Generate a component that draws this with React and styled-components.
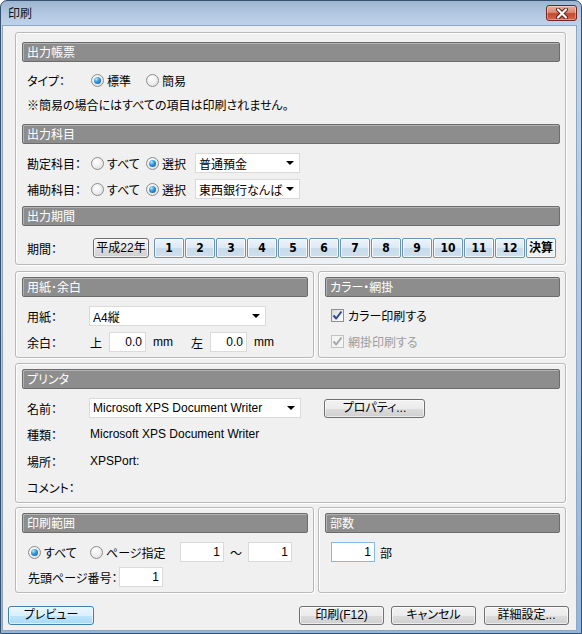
import React from 'react';
import styled, { createGlobalStyle, css } from 'styled-components';

const GlobalStyle = createGlobalStyle`
  html, body { margin: 0; padding: 0; background: #ffffff; }
  body {
    font-family: "Liberation Sans", "Noto Sans CJK JP", sans-serif;
    font-size: 12px;
    color: #000;
    font-feature-settings: "palt";
  }
  * { box-sizing: border-box; }
`;

const Window = styled.div`
  width: 582px;
  height: 634px;
  display: flex;
  flex-direction: column;
  border: 1px solid #34516f;
  border-radius: 7px 7px 0 0;
  background: linear-gradient(180deg, #9db5d1 0px, #b2c8e1 12px, #bed3ea 24px, #a9c6e6 60%, #8fb6df 100%);
  padding: 0 4px 2px 1px;
  overflow: hidden;
`;

const TitleBar = styled.div`
  height: 24px;
  display: flex;
  align-items: flex-start;
  flex-shrink: 0;
`;

const TitleText = styled.span`
  margin: 4px 0 0 6px;
  font-family: "Noto Sans CJK JP", sans-serif;
  font-size: 12px;
  line-height: 16px;
  color: #111;
`;

const CloseButton = styled.div`
  margin: 4px 0 0 auto;
  width: 31px;
  height: 16px;
  border: 1px solid #6a2a22;
  border-radius: 3px;
  background: linear-gradient(180deg, #e9ad9c 0%, #dc8b75 45%, #c4492f 55%, #d2684b 100%);
  box-shadow: inset 0 0 0 1px rgba(255, 255, 255, 0.35);
  display: flex;
  align-items: center;
  justify-content: center;
`;

const Client = styled.div`
  flex: 1;
  min-height: 0;
  background: #f0f0f0;
  border: 1px solid #8ea6c1;
  padding: 6px 7px 0 5px;
  display: flex;
  flex-direction: column;
`;

const Groups = styled.div`
  display: flex;
  flex-direction: column;
  flex-shrink: 0;
  padding: 0 3px 0 7px;
`;

const GroupRow = styled.div`
  display: flex;
  flex-shrink: 0;
  gap: 4px;
  margin-top: ${(p) => p.$mt}px;
`;

const GroupBox = styled.div`
  height: ${(p) => p.$h}px;
  flex-shrink: 0;
  ${(p) =>
    p.$w
      ? css`
          width: ${p.$w}px;
        `
      : ''}
  ${(p) =>
    p.$grow
      ? css`
          flex-grow: 1;
          flex-basis: 0;
        `
      : ''}
  margin-top: ${(p) => p.$mt || 0}px;
  border: 1px solid #b9b9b9;
  border-radius: 3px;
  box-shadow: inset 1px 1px 0 #ffffff, 1px 1px 0 #ffffff;
  padding: 0 5px 0 6px;
  display: flex;
  flex-direction: column;
`;

const SectionHeader = styled.div`
  height: 20px;
  flex-shrink: 0;
  margin-top: ${(p) => p.$mt}px;
  background: #8d8d8d;
  border: 1px solid #6c6c6c;
  border-radius: 2px;
  box-shadow: inset 1px 1px 0 #b3b3b3;
  color: #ffffff;
  padding-left: 4px;
  line-height: 18px;
  font-family: "Noto Sans CJK JP", sans-serif;
`;

const Row = styled.div`
  display: flex;
  align-items: center;
  height: 20px;
  flex-shrink: 0;
  margin-top: ${(p) => p.$mt}px;
  padding-left: ${(p) => (p.$pl === undefined ? 5 : p.$pl)}px;
  white-space: nowrap;
`;

const Label = styled.span`
  width: ${(p) => p.$w}px;
  flex-shrink: 0;
  font-family: "Noto Sans CJK JP", sans-serif;
`;

const Text = styled.span`
  margin-left: ${(p) => p.$ml || 0}px;
  margin-right: ${(p) => p.$mr || 0}px;
  color: ${(p) => (p.$disabled ? '#9d9d9d' : '#000')};
`;

const RadioOption = styled.span`
  display: inline-flex;
  align-items: center;
  width: ${(p) => (p.$w ? `${p.$w}px` : 'auto')};
  flex-shrink: 0;
`;

const RadioCircle = styled.span`
  width: 13px;
  height: 13px;
  border-radius: 50%;
  border: 1px solid #8a8c8e;
  background: radial-gradient(circle at 40% 35%, #ffffff 0%, #ececec 55%, #d4d4d4 100%);
  margin-right: 3px;
  flex-shrink: 0;
  display: flex;
  align-items: center;
  justify-content: center;
`;

const RadioDot = styled.span`
  width: 7px;
  height: 7px;
  border-radius: 50%;
  background: radial-gradient(circle at 35% 30%, #b6ecff 0%, #3a9be0 40%, #0a4c8e 100%);
`;

const Select = styled.div`
  width: ${(p) => p.$w}px;
  height: 20px;
  flex-shrink: 0;
  background: #ffffff;
  border: 1px solid #dadada;
  display: flex;
  align-items: center;
  padding: 0 5px 0 3px;
`;

const SelectText = styled.span`
  flex: 1;
  min-width: 0;
  overflow: hidden;
  white-space: nowrap;
  text-overflow: clip;
`;

const Caret = styled.span`
  width: 0;
  height: 0;
  margin-left: 3px;
  flex-shrink: 0;
  border-left: 4px solid transparent;
  border-right: 4px solid transparent;
  border-top: 4px solid #000;
`;

const Field = styled.div`
  width: ${(p) => p.$w}px;
  height: 20px;
  flex-shrink: 0;
  background: #ffffff;
  border: 1px solid ${(p) => (p.$focus ? '#86b9e8' : '#dadada')};
  text-align: right;
  padding-right: 3px;
  line-height: 18px;
`;

const Tilde = styled.span`
  width: 24px;
  text-align: center;
  flex-shrink: 0;
`;

const YearButton = styled.div`
  width: 56px;
  height: 20px;
  margin-right: 5px;
  flex-shrink: 0;
  border: 1px solid #707070;
  border-radius: 3px;
  background: linear-gradient(180deg, #f4f4f4 0%, #ebebeb 50%, #dddddd 51%, #d0d0d0 100%);
  box-shadow: inset 0 0 0 1px rgba(255, 255, 255, 0.7);
  text-align: center;
  line-height: 18px;
`;

const PeriodButton = styled.div`
  width: 30px;
  height: 20px;
  margin-right: 1px;
  flex-shrink: 0;
  border: 1px solid #6a93b6;
  border-radius: 2px;
  background: ${(p) =>
    p.$plain
      ? 'linear-gradient(180deg, #f6f9fc 0%, #eaf0f6 100%)'
      : 'linear-gradient(180deg, #edf4fa 0%, #dde9f3 48%, #c8dbea 52%, #cfdfed 100%)'};
  box-shadow: inset 0 0 0 1px rgba(255, 255, 255, 0.75);
  text-align: center;
  line-height: 18px;
  font-weight: bold;
  font-family: "DejaVu Sans Condensed", "Noto Sans CJK JP", sans-serif;
  font-size: 12px;
`;

const CheckBox = styled.span`
  width: 13px;
  height: 13px;
  flex-shrink: 0;
  margin-right: 4px;
  border: 1px solid ${(p) => (p.$disabled ? '#c2c2c2' : '#8e8f8f')};
  background: ${(p) =>
    p.$disabled ? '#f4f4f4' : 'linear-gradient(135deg, #d8d8d8 0%, #f6f6f6 70%, #ffffff 100%)'};
  display: flex;
  align-items: center;
  justify-content: center;
`;

const WinButton = styled.div`
  width: ${(p) => p.$w}px;
  height: 19px;
  flex-shrink: 0;
  margin-left: ${(p) => p.$ml || 0}px;
  border: 1px solid ${(p) => (p.$primary ? '#3c7fb1' : '#707070')};
  border-radius: 3px;
  background: ${(p) =>
    p.$primary
      ? 'linear-gradient(180deg, #eaf6fd 0%, #d9f0fc 50%, #bee6fd 51%, #a7d9f5 100%)'
      : 'linear-gradient(180deg, #f2f2f2 0%, #ebebeb 50%, #dddddd 51%, #cfcfcf 100%)'};
  box-shadow: inset 0 0 0 1px rgba(255, 255, 255, 0.6);
  text-align: center;
  line-height: 17px;
  white-space: nowrap;
`;

const ButtonBar = styled.div`
  display: flex;
  align-items: center;
  flex-shrink: 0;
  margin-top: 13px;
`;

const Spacer = styled.div`
  flex: 1;
`;

const Radio = ({ checked, children, w }) => (
  <RadioOption $w={w}>
    <RadioCircle>{checked && <RadioDot />}</RadioCircle>
    <Text>{children}</Text>
  </RadioOption>
);

const Check = ({ disabled, children }) => (
  <>
    <CheckBox $disabled={disabled}>
      <svg width="11" height="11" viewBox="0 0 11 11">
        <path
          d="M1.5 5.5 L4.2 8.5 L9.5 1.5"
          fill="none"
          stroke={disabled ? '#a8a8a8' : '#2d4a93'}
          strokeWidth="2"
          strokeLinejoin="round"
        />
      </svg>
    </CheckBox>
    <Text $disabled={disabled}>{children}</Text>
  </>
);

const Dropdown = ({ w, children }) => (
  <Select $w={w}>
    <SelectText>{children}</SelectText>
    <Caret />
  </Select>
);

const months = ['1', '2', '3', '4', '5', '6', '7', '8', '9', '10', '11', '12'];

export default function App() {
  return (
    <>
      <GlobalStyle />
      <Window>
        <TitleBar>
          <TitleText>印刷</TitleText>
          <CloseButton>
            <svg width="14" height="11" viewBox="0 0 14 11">
              <path d="M3 1.5 L11 9.5 M11 1.5 L3 9.5" stroke="#5a1e16" strokeWidth="4" strokeLinecap="round" />
              <path d="M3 1.5 L11 9.5 M11 1.5 L3 9.5" stroke="#ffffff" strokeWidth="2.2" strokeLinecap="round" />
            </svg>
          </CloseButton>
        </TitleBar>
        <Client>
          <Groups>
            <GroupBox $h={233}>
              <SectionHeader $mt={9}>出力帳票</SectionHeader>
              <Row $mt={8}>
                <Label $w={64}>タイプ：</Label>
                <Radio checked w={55}>標準</Radio>
                <Radio>簡易</Radio>
              </Row>
              <Row $mt={4}>
                <Text>※簡易の場合にはすべての項目は印刷されません。</Text>
              </Row>
              <SectionHeader $mt={10}>出力科目</SectionHeader>
              <Row $mt={9}>
                <Label $w={64}>勘定科目：</Label>
                <Radio w={55}>すべて</Radio>
                <Radio checked w={49}>選択</Radio>
                <Dropdown w={105}>普通預金</Dropdown>
              </Row>
              <Row $mt={6}>
                <Label $w={64}>補助科目：</Label>
                <Radio w={55}>すべて</Radio>
                <Radio checked w={49}>選択</Radio>
                <Dropdown w={105}>東西銀行なんば支店</Dropdown>
              </Row>
              <SectionHeader $mt={7}>出力期間</SectionHeader>
              <Row $mt={12}>
                <Label $w={66}>期間：</Label>
                <YearButton>平成22年</YearButton>
                {months.map((m) => (
                  <PeriodButton key={m}>{m}</PeriodButton>
                ))}
                <PeriodButton $plain>決算</PeriodButton>
              </Row>
            </GroupBox>

            <GroupRow $mt={6}>
              <GroupBox $h={87} $w={299}>
                <SectionHeader $mt={5}>用紙･余白</SectionHeader>
                <Row $mt={9}>
                  <Label $w={62}>用紙：</Label>
                  <Dropdown w={177}>A4縦</Dropdown>
                </Row>
                <Row $mt={6}>
                  <Label $w={63}>余白：</Label>
                  <Text $mr={7}>上</Text>
                  <Field $w={37}>0.0</Field>
                  <Text $ml={7} $mr={18}>mm</Text>
                  <Text $mr={7}>左</Text>
                  <Field $w={37}>0.0</Field>
                  <Text $ml={7}>mm</Text>
                </Row>
              </GroupBox>
              <GroupBox $h={87} $grow>
                <SectionHeader $mt={5}>カラー・網掛</SectionHeader>
                <Row $mt={8} $pl={6}>
                  <Check>カラー印刷する</Check>
                </Row>
                <Row $mt={6} $pl={6}>
                  <Check disabled>網掛印刷する</Check>
                </Row>
              </GroupBox>
            </GroupRow>

            <GroupBox $h={140} $mt={5}>
              <SectionHeader $mt={5}>プリンタ</SectionHeader>
              <Row $mt={9}>
                <Label $w={62}>名前：</Label>
                <Dropdown w={212}>Microsoft XPS Document Writer</Dropdown>
                <WinButton $w={101} $ml={23}>プロパティ...</WinButton>
              </Row>
              <Row $mt={6}>
                <Label $w={62}>種類：</Label>
                <Text $ml={1}>Microsoft XPS Document Writer</Text>
              </Row>
              <Row $mt={7}>
                <Label $w={62}>場所：</Label>
                <Text $ml={1}>XPSPort:</Text>
              </Row>
              <Row $mt={6}>
                <Label $w={62}>コメント：</Label>
              </Row>
            </GroupBox>

            <GroupRow $mt={4}>
              <GroupBox $h={86} $w={299}>
                <SectionHeader $mt={5}>印刷範囲</SectionHeader>
                <Row $mt={9} $pl={6}>
                  <Radio checked w={62}>すべて</Radio>
                  <Radio w={90}>ページ指定</Radio>
                  <Field $w={44}>1</Field>
                  <Tilde>～</Tilde>
                  <Field $w={44}>1</Field>
                </Row>
                <Row $mt={5} $pl={6}>
                  <Label $w={91}>先頭ページ番号：</Label>
                  <Field $w={44}>1</Field>
                </Row>
              </GroupBox>
              <GroupBox $h={86} $grow>
                <SectionHeader $mt={5}>部数</SectionHeader>
                <Row $mt={9} $pl={6}>
                  <Field $w={44} $focus>1</Field>
                  <Text $ml={5}>部</Text>
                </Row>
              </GroupBox>
            </GroupRow>
          </Groups>

          <ButtonBar>
            <WinButton $w={86} $primary>プレビュー</WinButton>
            <Spacer />
            <WinButton $w={85}>印刷(F12)</WinButton>
            <WinButton $w={85} $ml={7}>キャンセル</WinButton>
            <WinButton $w={85} $ml={8}>詳細設定...</WinButton>
          </ButtonBar>
        </Client>
      </Window>
    </>
  );
}
